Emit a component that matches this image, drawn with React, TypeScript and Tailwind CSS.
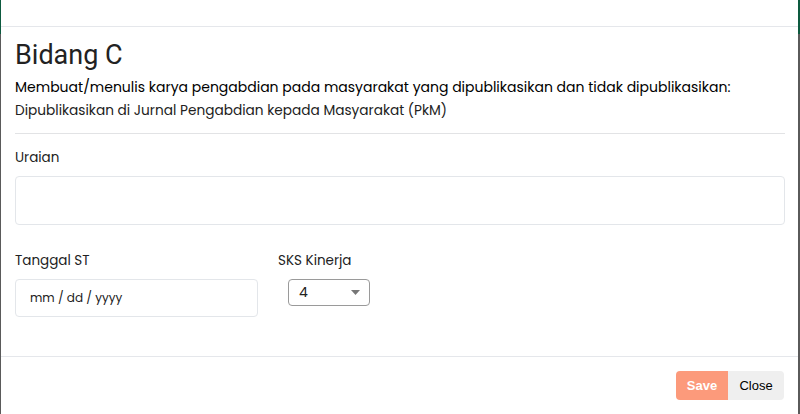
import React from 'react';

const font = { fontFamily: 'Poppins, "Open Sans", "Noto Sans", sans-serif' };

const App: React.FC = () => {
  return (
    <div className="w-[800px] h-[414px] overflow-hidden bg-[linear-gradient(to_bottom,#0d5a3f_34px,#5a5a5a_34px)] pl-px pr-[2px]">
      <div className="h-full bg-white text-[#212529] flex flex-col" style={font}>
        {/* header (scrolled away) */}
        <div className="h-[27px] border-b border-[#e5e7eb] shrink-0" />

        <div className="px-[14px] flex-1">
          <h1 className="mt-[12px] h-[32px] leading-[32px] text-[27px] font-normal text-[#222]" style={{ fontFamily: 'Roboto, sans-serif' }}>
            Bidang C
          </h1>
          <p className="mt-[5px] text-[14px] leading-[23px] font-normal text-black">
            Membuat/menulis karya pengabdian pada masyarakat yang dipublikasikan dan tidak dipublikasikan:
          </p>
          <p className="text-[13.7px] leading-[23px] text-[#222]">
            Dipublikasikan di Jurnal Pengabdian kepada Masyarakat (PkM)
          </p>
          <div className="mt-[11px] border-t border-[#e2e3e5] mr-[-1px]" />

          <label className="block mt-[14px] text-[13.5px] leading-[20px] text-[#222]">Uraian</label>
          <div className="mt-[8px] h-[49px] border border-[#e3e6ea] rounded-[4px] mr-[-1px]" />

          <div className="flex mt-[26px]">
            <div className="w-[243px]">
              <label className="block text-[13.5px] leading-[20px] text-[#222]">Tanggal ST</label>
              <div className="mt-[8px] h-[38px] border border-[#e3e6ea] rounded-[4px] flex items-center pl-[14px] text-[12px] text-[#222]">
                mm / dd / yyyy
              </div>
            </div>
            <div className="ml-[20px]">
              <label className="block text-[13.5px] leading-[20px] text-[#222]">SKS Kinerja</label>
              <div className="mt-[8px] ml-[10px] w-[82px] h-[27px] border border-[#9a9a9a] rounded-[4px] flex items-center justify-between pl-[10px] pr-[9px] text-[14px] text-[#222]">
                <span>4</span>
                <svg width="9" height="5" viewBox="0 0 9 5">
                  <path d="M0 0 L9 0 L4.5 5 Z" fill="#777" />
                </svg>
              </div>
            </div>
          </div>
        </div>

        <div className="h-[58px] border-t border-[#e5e7eb] flex items-start justify-end pt-[14px] pr-[14px] shrink-0">
          <div className="flex rounded-[4px] overflow-hidden text-[13px] h-[29px]" style={{ fontFamily: '"Liberation Sans", Arial, sans-serif' }}>
            <button className="w-[52px] bg-[#fc9a7b] text-white font-bold">Save</button>
            <button className="w-[56px] bg-[#efefef] text-black">Close</button>
          </div>
        </div>
      </div>
    </div>
  );
};

export default App;
